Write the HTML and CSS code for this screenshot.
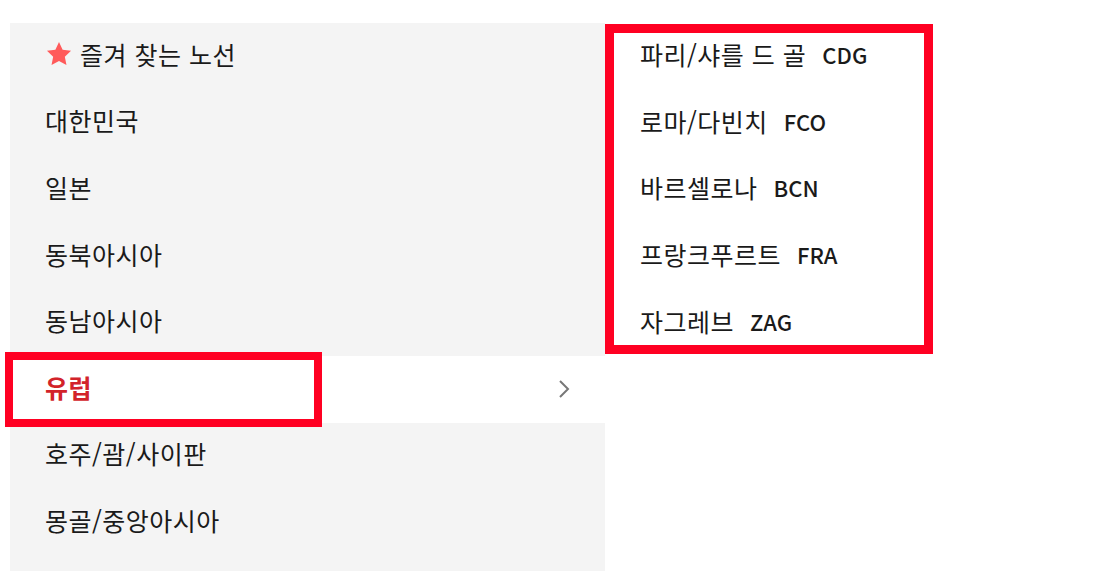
FILE: index.html
```html
<!DOCTYPE html>
<html lang="ko">
<head>
  <meta charset="UTF-8" />
  <meta name="viewport" content="width=device-width, initial-scale=1.0"/>
  <title>노선 선택</title>
  <link rel="stylesheet" href="styles.css">
</head>
<body>
  <div class="menu">
    <ul class="region-list">
      <li class="region fav">
        <svg class="star" viewBox="0 0 24 24" width="28" height="28">
          <path d="M12 1.8l3.1 6.6 7.2.9-5.3 5 1.4 7.1L12 17.9l-6.4 3.5 1.4-7.1-5.3-5 7.2-.9z" fill="#ff5a5a"/>
        </svg>
        <span>즐겨 찾는 노선</span>
      </li>
      <li class="region">대한민국</li>
      <li class="region">일본</li>
      <li class="region">동북아시아</li>
      <li class="region">동남아시아</li>
      <li class="region active">
        <span>유럽</span>
        <svg class="chevron" viewBox="0 0 12 20" width="12" height="20">
          <path d="M2 2l8 8-8 8" fill="none" stroke="#777" stroke-width="2"/>
        </svg>
        <div class="mark"></div>
      </li>
      <li class="region">호주/괌/사이판</li>
      <li class="region">몽골/중앙아시아</li>
    </ul>

    <ul class="city-list">
      <li class="city">파리/샤를 드 골 <span class="code">CDG</span></li>
      <li class="city">로마/다빈치 <span class="code">FCO</span></li>
      <li class="city">바르셀로나 <span class="code">BCN</span></li>
      <li class="city">프랑크푸르트 <span class="code">FRA</span></li>
      <li class="city">자그레브 <span class="code">ZAG</span></li>
    </ul>
  </div>
</body>
</html>
```

FILE: styles.css
```css
html, body {
  margin: 0;
  padding: 0;
  background-color: #ffffff;
  font-family: "Noto Sans CJK KR", "Noto Sans", sans-serif;
  color: #1a1a1a;
  overflow: hidden;
}

ul {
  list-style: none;
  margin: 0;
  padding: 0;
}

.menu {
  display: flex;
  align-items: flex-start;
  margin: 23px 0 0 10px;
}

.region-list {
  width: 595px;
  height: 560px;
  background-color: #f4f4f4;
}

.region {
  position: relative;
  height: 66.6px;
  box-sizing: border-box;
  padding: 0 35px 5px 35px;
  display: flex;
  align-items: center;
  font-size: 25px;
  letter-spacing: 0.5px;
}

.region.fav {
  gap: 7px;
}

.region .star {
  margin-top: 1px;
}

.region.active {
  background-color: #ffffff;
  justify-content: space-between;
  color: #d2232a;
  font-weight: 700;
}

.chevron {
  margin-top: 4px;
}

.region .mark {
  position: absolute;
  left: -5px;
  top: -4px;
  width: 301px;
  height: 59px;
  border: 8px solid #ff0022;
}

.city-list {
  width: 328px;
  height: 330px;
  box-sizing: border-box;
  background-color: #ffffff;
  outline: 9px solid #ff0022;
  outline-offset: -9px;
  margin-top: 1px;
}

.city {
  height: 66.6px;
  box-sizing: border-box;
  padding: 0 0 6px 35px;
  display: flex;
  align-items: center;
  font-size: 25px;
  letter-spacing: 0.5px;
}

.city .code {
  margin-left: 16px;
  font-size: 22px;
  font-weight: 500;
  letter-spacing: 0;
}
```
